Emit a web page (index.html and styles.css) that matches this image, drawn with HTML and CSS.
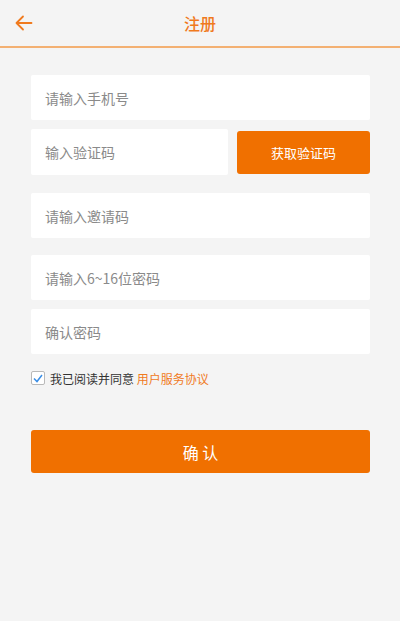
FILE: index.html
```html
<!DOCTYPE html>
<html lang="zh">
<head>
<meta charset="utf-8">
<title>注册</title>
<link rel="stylesheet" href="styles.css">
</head>
<body>
<header class="topbar">
  <span class="back">
    <svg width="18" height="16" viewBox="0 0 18 16"><path d="M8 1.5 L1.5 8 L8 14.5 M1.5 8 H16.5" fill="none" stroke="#f07a1e" stroke-width="1.8" stroke-linecap="round" stroke-linejoin="round"/></svg>
  </span>
  <h1 class="title">注册</h1>
</header>
<main class="form">
  <div class="field">请输入手机号</div>
  <div class="row">
    <div class="field field-code">输入验证码</div>
    <button class="btn-code">获取验证码</button>
  </div>
  <div class="field gap-top">请输入邀请码</div>
  <div class="field gap-top2">请输入6~16位密码</div>
  <div class="field">确认密码</div>
  <label class="agree">
    <span class="check">
      <svg width="10" height="9" viewBox="0 0 10 9"><path d="M1 4.5 L4 7.5 L9 1" fill="none" stroke="#3a8ee6" stroke-width="1.5"/></svg>
    </span>
    <span>我已阅读并同意 <span class="link">用户服务协议</span></span>
  </label>
  <button class="btn-submit">确 认</button>
</main>
</body>
</html>
```

FILE: styles.css
```css
html, body {
  margin: 0;
  padding: 0;
  background: #f4f4f4;
  font-family: "Noto Sans CJK SC", "Noto Sans", sans-serif;
}
.topbar {
  position: relative;
  height: 46px;
  display: flex;
  align-items: center;
  justify-content: center;
  border-bottom: 2px solid #f3b072;
}
.back {
  position: absolute;
  left: 15px;
  top: 15px;
  display: flex;
}
.title {
  margin: 0;
  font-size: 16px;
  font-weight: 500;
  color: #f07a1e;
  line-height: 20px;
}
.form {
  padding: 27px 30px 0 31px;
  display: flex;
  flex-direction: column;
}
.field {
  height: 45px;
  background: #fff;
  border-radius: 2px;
  display: flex;
  align-items: center;
  padding-left: 14px;
  font-size: 14px;
  color: #8a8a8a;
  margin-bottom: 9px;
}
.row {
  display: flex;
  gap: 9px;
  margin-bottom: 9px;
  align-items: center;
}
.row .field {
  margin-bottom: 0;
}
.field-code {
  width: 183px;
  height: 46px;
}
.btn-code {
  flex: 1;
  height: 43px;
  border: none;
  border-radius: 3px;
  background: #f07000;
  color: #fff;
  font-family: inherit;
  font-size: 13px;
}
.gap-top { margin-top: 9px; }
.gap-top2 { margin-top: 8px; }
.agree {
  display: flex;
  align-items: center;
  gap: 5px;
  font-size: 12px;
  color: #333;
  height: 30px;
}
.check {
  width: 12px;
  height: 12px;
  border: 1px solid #b9b9b9;
  border-radius: 2px;
  background: #fff;
  display: flex;
  align-items: center;
  justify-content: center;
}
.link { color: #f07a1e; }
.btn-submit {
  margin-top: 37px;
  height: 43px;
  border: none;
  border-radius: 3px;
  background: #f07000;
  color: #fff;
  font-family: inherit;
  font-size: 16px;
}
```
